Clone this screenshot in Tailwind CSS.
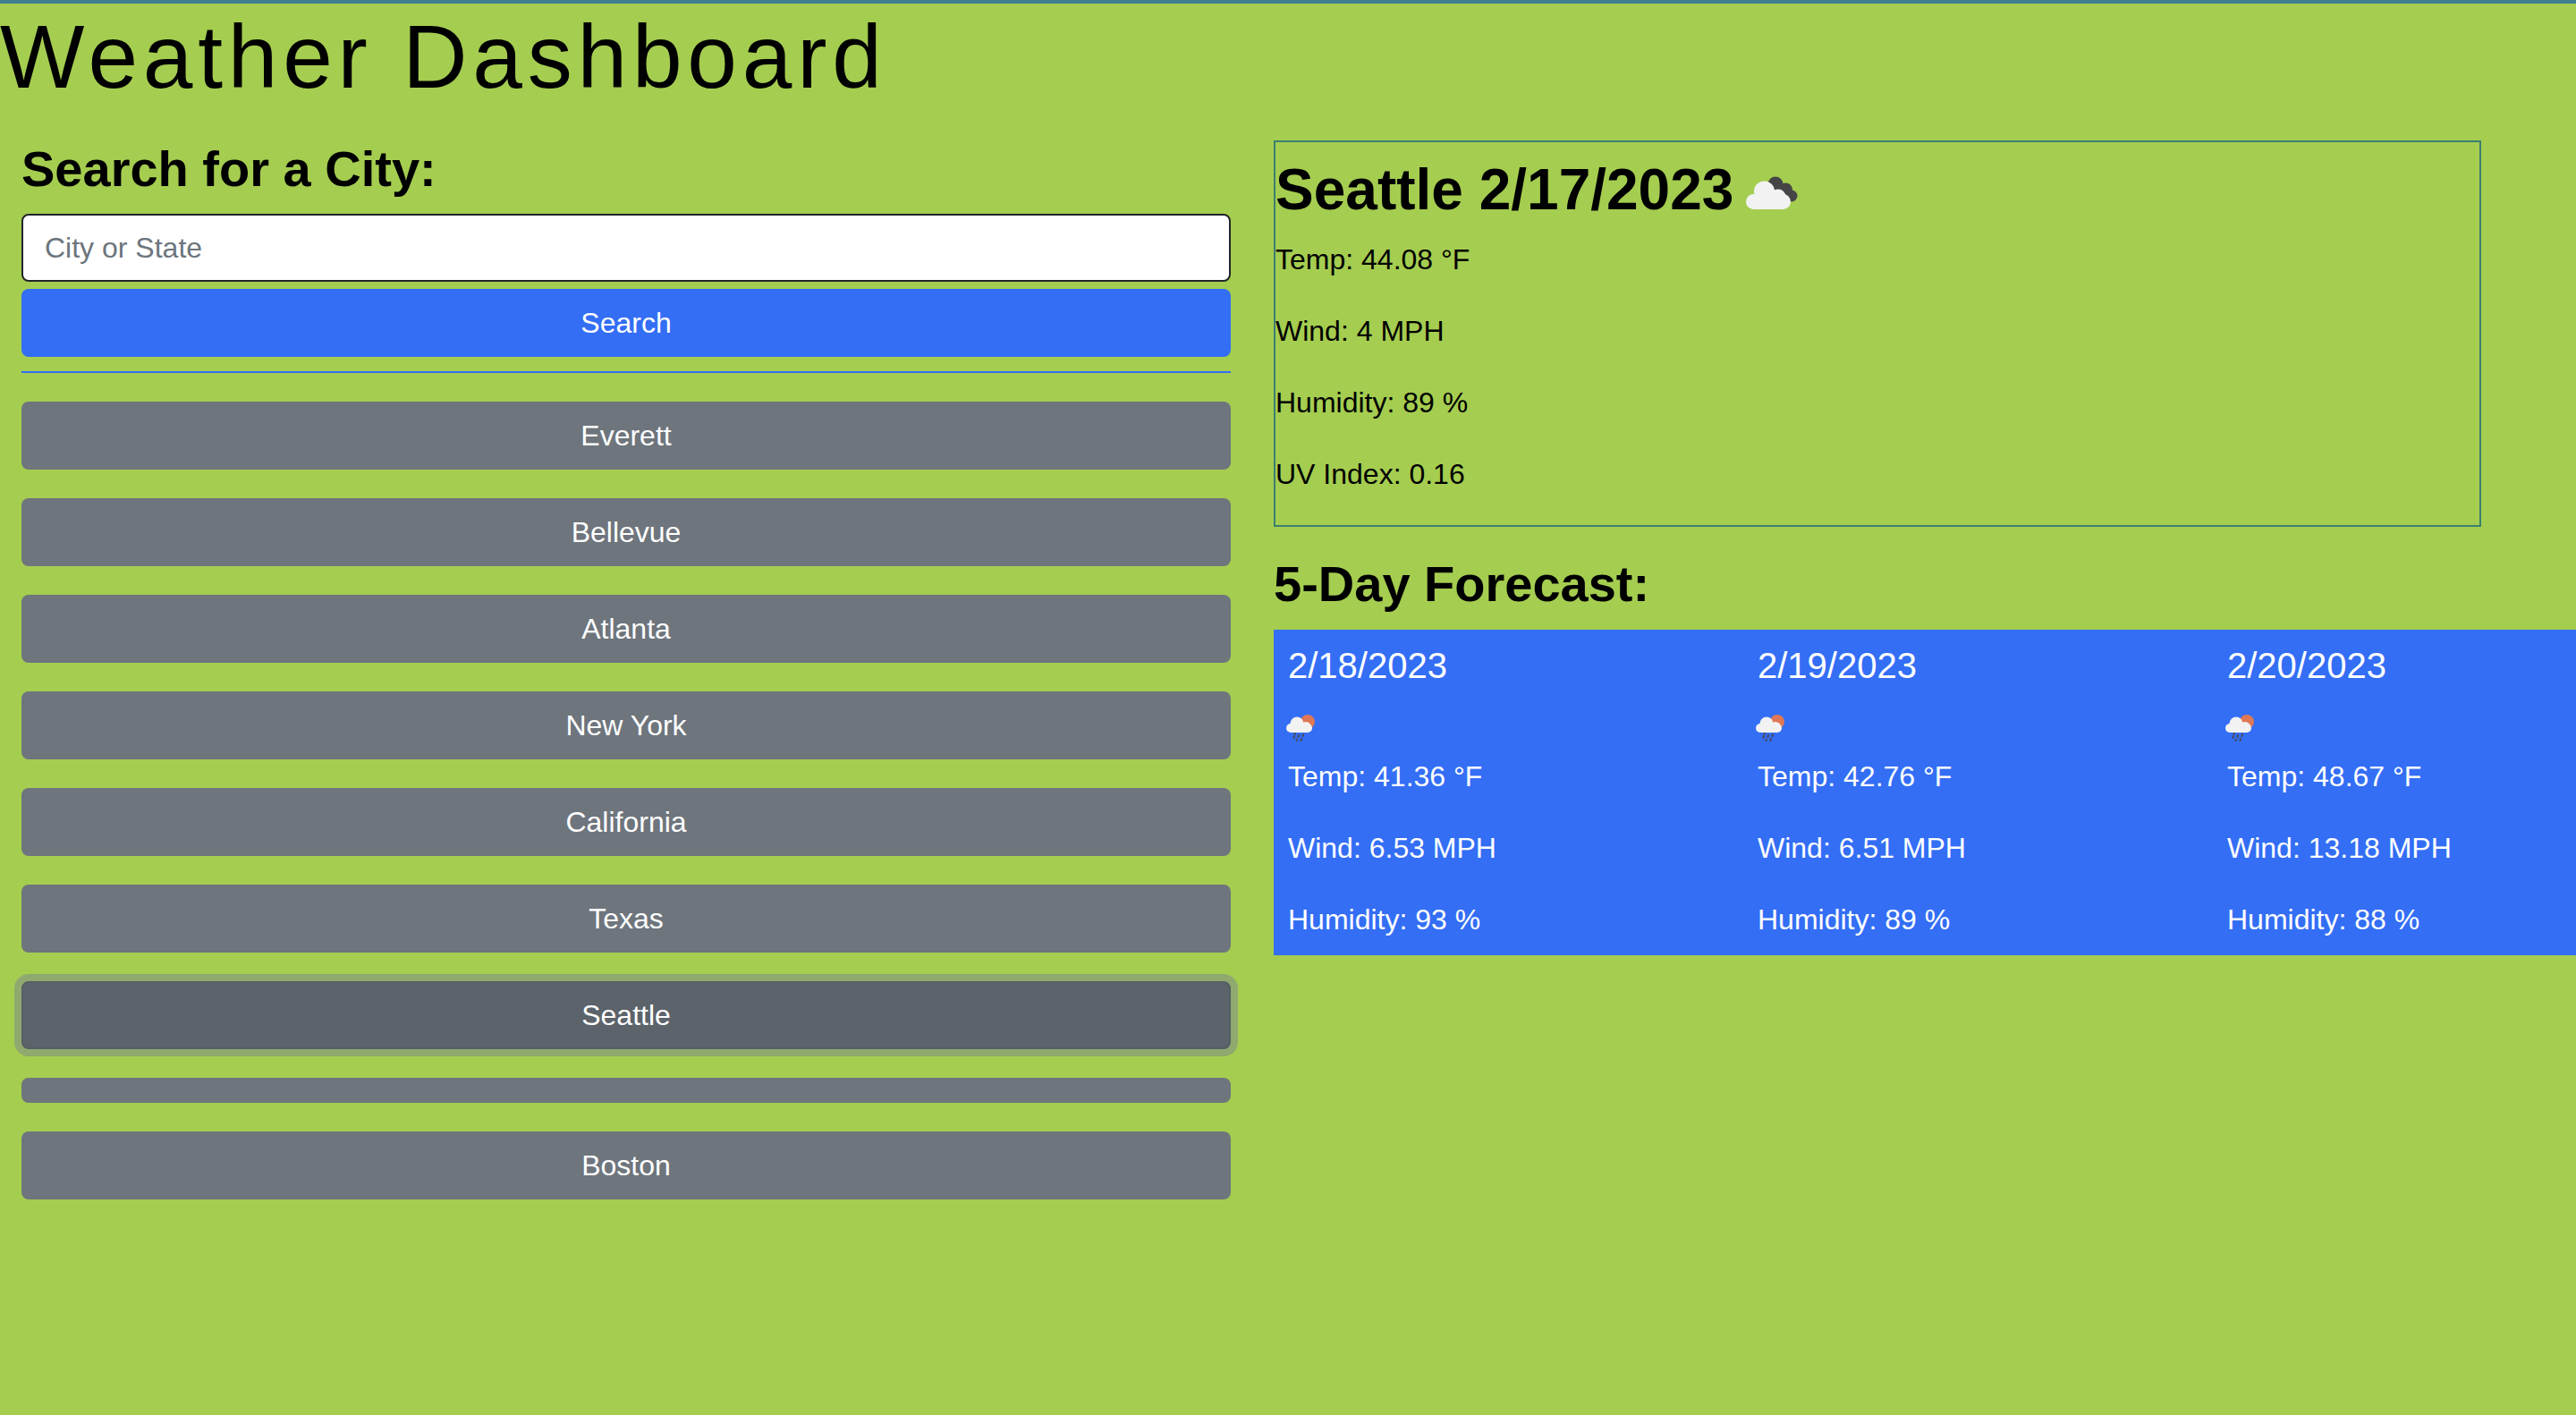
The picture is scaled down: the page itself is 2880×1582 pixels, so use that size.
<!DOCTYPE html>
<html lang="en">
<head>
    <meta charset="UTF-8">
    <meta name="viewport" content="width=device-width, initial-scale=1.0">
    <title>Weather Dashboard</title>
    <script src="https://cdn.jsdelivr.net/npm/@tailwindcss/browser@4"></script>
</head>
<body class="bg-[#a5cd50] text-black font-['Liberation_Sans',Arial,sans-serif] overflow-hidden h-[1582px]">

    <header class="border-t-4 border-[#3f7f8f] h-[149px]">
        <h1 class="text-[100px] leading-[115px] tracking-[5.8px] pt-[2px]">Weather Dashboard</h1>
    </header>

    <main class="flex">
        <!-- search column -->
        <section class="w-[1400px] shrink-0 px-6 flex flex-col">
            <h3 class="text-[56px] leading-[67px] font-bold pt-[6px] mb-[17px]">Search for a City:</h3>
            <input type="text" placeholder="City or State" class="w-full h-[76px] bg-white border-2 border-[#212529] rounded-lg px-6 text-[32px] placeholder:text-[#6c757d]">
            <button class="mt-[8px] h-[76px] rounded-lg bg-[#336ef5] text-white text-[32px]">Search</button>
            <hr class="mt-4 mb-8 border-t-2 border-[#336ef5]">

            <div class="flex flex-col gap-8">
                <button class="h-[76px] rounded-lg bg-[#6e757d] text-white text-[32px]">Everett</button>
                <button class="h-[76px] rounded-lg bg-[#6e757d] text-white text-[32px]">Bellevue</button>
                <button class="h-[76px] rounded-lg bg-[#6e757d] text-white text-[32px]">Atlanta</button>
                <button class="h-[76px] rounded-lg bg-[#6e757d] text-white text-[32px]">New York</button>
                <button class="h-[76px] rounded-lg bg-[#6e757d] text-white text-[32px]">California</button>
                <button class="h-[76px] rounded-lg bg-[#6e757d] text-white text-[32px]">Texas</button>
                <button class="h-[76px] rounded-lg bg-[#5c636a] border-2 border-[#565e64] ring-8 ring-[#8fa96f] text-white text-[32px]">Seattle</button>
                <button class="h-[28px] rounded-lg bg-[#6e757d]"></button>
                <button class="h-[76px] rounded-lg bg-[#6e757d] text-white text-[32px]">Boston</button>
            </div>
        </section>

        <!-- weather column -->
        <section class="flex-1 min-w-0 pl-[24px] pt-2">
            <div class="w-[1350px] h-[432px] border-2 border-[#3a8070]">
                <h2 class="text-[64px] leading-[77px] font-bold whitespace-nowrap">Seattle 2/17/2023
                    <svg class="inline align-baseline -ml-[5px]" width="60" height="75" viewBox="0 0 60 75">
                        <g fill="#454545">
                            <circle cx="34" cy="47" r="8.500"/>
                            <circle cx="45.500" cy="53" r="7.500"/>
                            <circle cx="52" cy="60" r="6.500"/>
                            <path d="M28 50 L48 46 L54 66 L40 66 Z"/>
                        </g>
                        <g fill="#f2f2f2">
                            <circle cx="21.500" cy="55" r="11.500"/>
                            <circle cx="37" cy="61" r="8.500"/>
                            <rect x="1" y="58" width="50" height="17" rx="8.500"/>
                        </g>
                    </svg>
                </h2>
                <div class="mt-[15px] flex flex-col gap-8 text-[32px] leading-[48px]">
                    <p>Temp: 44.08 °F</p>
                    <p>Wind: 4 MPH</p>
                    <p>Humidity: 89 %</p>
                    <p>UV Index: 0.16</p>
                </div>
            </div>

            <h3 class="text-[56px] leading-[67px] font-bold mt-[30px] mb-[18px]">5-Day Forecast:</h3>

            <div class="bg-[#336ef5] text-white grid grid-cols-[525px_525px_525px] h-[364px] pl-[16px] pt-[16px]">
                <div>
                    <h5 class="text-[40px] leading-[48px] mb-2">2/18/2023</h5>
                    <svg class="-ml-[4px]" width="40" height="68" viewBox="0 0 40 68">
                        <circle cx="26" cy="31" r="8" fill="#de7856"/>
                        <g fill="#f2f2f2">
                            <circle cx="14" cy="33" r="7.500"/>
                            <circle cx="24" cy="37" r="6"/>
                            <rect x="2" y="33" width="29" height="10" rx="5"/>
                        </g>
                        <g stroke="#4a4a55" stroke-width="2" stroke-linecap="round">
                            <path d="M12 44 L11.500 45"/><path d="M11 47 L10.500 49"/><path d="M16 46 L15.500 48"/>
                            <path d="M21 45 L20.500 47"/><path d="M14 51 L13.500 52"/><path d="M19 50 L18.500 52"/>
                        </g>
                    </svg>
                    <div class="flex flex-col gap-8 text-[32px] leading-[48px]">
                        <p>Temp: 41.36 °F</p>
                        <p>Wind: 6.53 MPH</p>
                        <p>Humidity: 93 %</p>
                    </div>
                </div>
                <div>
                    <h5 class="text-[40px] leading-[48px] mb-2">2/19/2023</h5>
                    <svg class="-ml-[4px]" width="40" height="68" viewBox="0 0 40 68">
                        <circle cx="26" cy="31" r="8" fill="#de7856"/>
                        <g fill="#f2f2f2">
                            <circle cx="14" cy="33" r="7.500"/>
                            <circle cx="24" cy="37" r="6"/>
                            <rect x="2" y="33" width="29" height="10" rx="5"/>
                        </g>
                        <g stroke="#4a4a55" stroke-width="2" stroke-linecap="round">
                            <path d="M12 44 L11.500 45"/><path d="M11 47 L10.500 49"/><path d="M16 46 L15.500 48"/>
                            <path d="M21 45 L20.500 47"/><path d="M14 51 L13.500 52"/><path d="M19 50 L18.500 52"/>
                        </g>
                    </svg>
                    <div class="flex flex-col gap-8 text-[32px] leading-[48px]">
                        <p>Temp: 42.76 °F</p>
                        <p>Wind: 6.51 MPH</p>
                        <p>Humidity: 89 %</p>
                    </div>
                </div>
                <div>
                    <h5 class="text-[40px] leading-[48px] mb-2">2/20/2023</h5>
                    <svg class="-ml-[4px]" width="40" height="68" viewBox="0 0 40 68">
                        <circle cx="26" cy="31" r="8" fill="#de7856"/>
                        <g fill="#f2f2f2">
                            <circle cx="14" cy="33" r="7.500"/>
                            <circle cx="24" cy="37" r="6"/>
                            <rect x="2" y="33" width="29" height="10" rx="5"/>
                        </g>
                        <g stroke="#4a4a55" stroke-width="2" stroke-linecap="round">
                            <path d="M12 44 L11.500 45"/><path d="M11 47 L10.500 49"/><path d="M16 46 L15.500 48"/>
                            <path d="M21 45 L20.500 47"/><path d="M14 51 L13.500 52"/><path d="M19 50 L18.500 52"/>
                        </g>
                    </svg>
                    <div class="flex flex-col gap-8 text-[32px] leading-[48px]">
                        <p>Temp: 48.67 °F</p>
                        <p>Wind: 13.18 MPH</p>
                        <p>Humidity: 88 %</p>
                    </div>
                </div>
            </div>
        </section>
    </main>

</body>
</html>
